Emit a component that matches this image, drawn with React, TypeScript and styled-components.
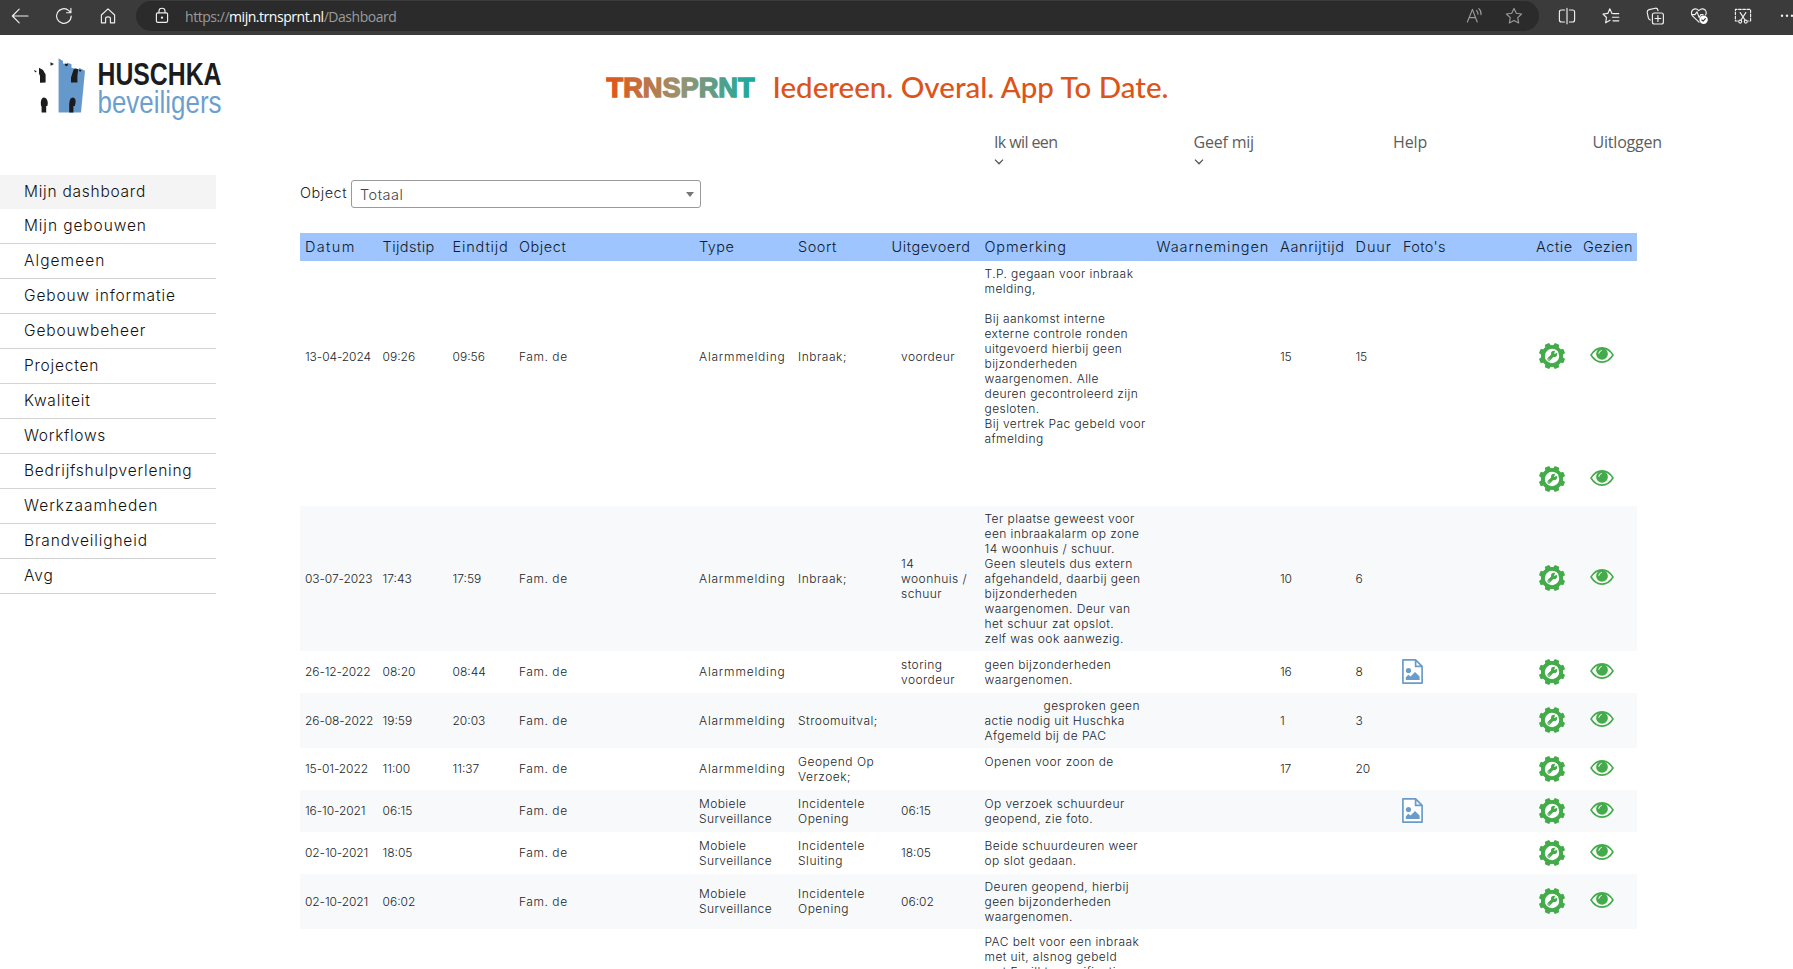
import type { ReactNode } from 'react';
import styled, { createGlobalStyle } from 'styled-components';

type Line = string | { text: string; indent?: number };

interface Report {
  date?: string;
  start?: string;
  end?: string;
  object?: string;
  type?: string[];
  kind?: string[];
  done?: string[];
  remark?: Line[];
  travel?: string;
  duration?: string;
  photo?: boolean;
  actions?: boolean;
  striped?: boolean;
  height: number;
}

const menuItems = [
  { label: 'Mijn dashboard', spacing: 0.75 },
  { label: 'Mijn gebouwen', spacing: 0.9 },
  { label: 'Algemeen', spacing: 1.05 },
  { label: 'Gebouw informatie', spacing: 0.87 },
  { label: 'Gebouwbeheer', spacing: 0.87 },
  { label: 'Projecten', spacing: 0.78 },
  { label: 'Kwaliteit', spacing: 0.83 },
  { label: 'Workflows', spacing: 0.68 },
  { label: 'Bedrijfshulpverlening', spacing: 0.78 },
  { label: 'Werkzaamheden', spacing: 0.98 },
  { label: 'Brandveiligheid', spacing: 0.84 },
  { label: 'Avg', spacing: 0.9 },
];

const navItems = [
  { label: 'Ik wil een', sub: true, spacing: -0.6 },
  { label: 'Geef mij', sub: true, spacing: -0.2 },
  { label: 'Help', sub: false, spacing: -0.1 },
  { label: 'Uitloggen', sub: false, spacing: -0.2 },
];

const columns = [
  { label: 'Datum', width: 77.5, spacing: 1.35 },
  { label: 'Tijdstip', width: 70, spacing: 0.45 },
  { label: 'Eindtijd', width: 66.5, spacing: 0.85 },
  { label: 'Object', width: 180, spacing: 0.55 },
  { label: 'Type', width: 99, spacing: 0.45 },
  { label: 'Soort', width: 93.5, spacing: 0.55 },
  { label: 'Uitgevoerd', width: 93, spacing: 0.55 },
  { label: 'Opmerking', width: 172, spacing: 0.87 },
  { label: 'Waarnemingen', width: 123.5, spacing: 0.92 },
  { label: 'Aanrijtijd', width: 75.5, spacing: 0.65 },
  { label: 'Duur', width: 47.5, spacing: 0.95 },
  { label: "Foto's", width: 133, spacing: 0.3 },
  { label: 'Actie', width: 47, spacing: 0.55 },
  { label: 'Gezien', width: 59, spacing: 0.45 },
];

const reports: Report[] = [
  {
    date: '13-04-2024',
    start: '09:26',
    end: '09:56',
    object: 'Fam. de',
    type: ['Alarmmelding'],
    kind: ['Inbraak;'],
    done: ['voordeur'],
    remark: [
      'T.P. gegaan voor inbraak',
      'melding,',
      '',
      'Bij aankomst interne',
      'externe controle ronden',
      'uitgevoerd hierbij geen',
      'bijzonderheden',
      'waargenomen. Alle',
      'deuren gecontroleerd zijn',
      'gesloten.',
      'Bij vertrek Pac gebeld voor',
      'afmelding',
    ],
    travel: '15',
    duration: '15',
    actions: true,
    height: 191,
  },
  { actions: true, height: 54 },
  {
    date: '03-07-2023',
    start: '17:43',
    end: '17:59',
    object: 'Fam. de',
    type: ['Alarmmelding'],
    kind: ['Inbraak;'],
    done: ['14', 'woonhuis /', 'schuur'],
    remark: [
      'Ter plaatse geweest voor',
      'een inbraakalarm op zone',
      '14 woonhuis / schuur.',
      'Geen sleutels dus extern',
      'afgehandeld, daarbij geen',
      'bijzonderheden',
      'waargenomen. Deur van',
      'het schuur zat opslot.',
      'zelf was ook aanwezig.',
    ],
    travel: '10',
    duration: '6',
    actions: true,
    striped: true,
    height: 145,
  },
  {
    date: '26-12-2022',
    start: '08:20',
    end: '08:44',
    object: 'Fam. de',
    type: ['Alarmmelding'],
    done: ['storing', 'voordeur'],
    remark: ['geen bijzonderheden', 'waargenomen.'],
    travel: '16',
    duration: '8',
    photo: true,
    actions: true,
    height: 42,
  },
  {
    date: '26-08-2022',
    start: '19:59',
    end: '20:03',
    object: 'Fam. de',
    type: ['Alarmmelding'],
    kind: ['Stroomuitval;'],
    remark: [
      { text: 'gesproken geen', indent: 59 },
      'actie nodig uit Huschka',
      'Afgemeld bij de PAC',
    ],
    travel: '1',
    duration: '3',
    actions: true,
    striped: true,
    height: 55,
  },
  {
    date: '15-01-2022',
    start: '11:00',
    end: '11:37',
    object: 'Fam. de',
    type: ['Alarmmelding'],
    kind: ['Geopend Op', 'Verzoek;'],
    remark: ['Openen voor zoon de', ''],
    travel: '17',
    duration: '20',
    actions: true,
    height: 42,
  },
  {
    date: '16-10-2021',
    start: '06:15',
    object: 'Fam. de',
    type: ['Mobiele', 'Surveillance'],
    kind: ['Incidentele', 'Opening'],
    done: ['06:15'],
    remark: ['Op verzoek schuurdeur', 'geopend, zie foto.'],
    photo: true,
    actions: true,
    striped: true,
    height: 42,
  },
  {
    date: '02-10-2021',
    start: '18:05',
    object: 'Fam. de',
    type: ['Mobiele', 'Surveillance'],
    kind: ['Incidentele', 'Sluiting'],
    done: ['18:05'],
    remark: ['Beide schuurdeuren weer', 'op slot gedaan.'],
    actions: true,
    height: 42,
  },
  {
    date: '02-10-2021',
    start: '06:02',
    object: 'Fam. de',
    type: ['Mobiele', 'Surveillance'],
    kind: ['Incidentele', 'Opening'],
    done: ['06:02'],
    remark: ['Deuren geopend, hierbij', 'geen bijzonderheden', 'waargenomen.'],
    actions: true,
    striped: true,
    height: 55,
  },
  {
    remark: [
      'PAC belt voor een inbraak',
      'met uit, alsnog gebeld',
      'met E-cill ter verificatie',
    ],
    height: 55,
  },
];

function Lines({ items = [] }: { items?: Line[] }) {
  return (
    <>
      {items.map((item, i) => {
        const line = typeof item === 'string' ? { text: item } : item;
        return (
          <TextLine key={i} $indent={line.indent}>
            {line.text}
          </TextLine>
        );
      })}
    </>
  );
}

function GearIcon() {
  const teeth = [22.5, 67.5, 112.5, 157.5, 202.5, 247.5, 292.5, 337.5];
  return (
    <svg width="26" height="26" viewBox="0 0 26 26">
      <g fill="#43ab49">
        {teeth.map((angle) => (
          <path
            key={angle}
            d="M9.9 4 L10.5 .5 Q10.6 -.2 11.4 -.2 H14.6 Q15.4 -.2 15.5 .5 L16.1 4 Z"
            transform={`rotate(${angle} 13 13)`}
          />
        ))}
        <circle cx="13" cy="13" r="11" />
      </g>
      <circle cx="13" cy="13" r="7.2" fill="#fff" />
      <path d="M10 16 L14.6 11.4" stroke="#43ab49" strokeWidth="3.2" strokeLinecap="round" />
      <circle cx="15.1" cy="10.9" r="3.1" fill="#43ab49" />
      <path d="M15 11 L16.6 6.4 L19.6 9.2 Z" fill="#fff" />
      <circle cx="9.9" cy="16.1" r=".6" fill="#fff" />
    </svg>
  );
}

function EyeIcon() {
  return (
    <svg width="24" height="16" viewBox="0 0 24 16">
      <path
        d="M1 8 C4 3.2 8 .9 12 .9 S20 3.2 23 8 C20 12.8 16 15.1 12 15.1 S4 12.8 1 8Z"
        fill="#fff"
        stroke="#43ab49"
        strokeWidth="1.6"
        strokeLinejoin="round"
      />
      <circle cx="12" cy="6.9" r="5.9" fill="#43ab49" />
      <path d="M8.8 6.4 Q9 4 11.4 3.5" fill="none" stroke="#fff" strokeWidth="1" strokeLinecap="round" />
    </svg>
  );
}

function PhotoIcon() {
  return (
    <svg width="21" height="25" viewBox="0 0 21 25">
      <path
        d="M.9 .9 H13.6 L20.1 7.4 V24.1 H.9Z M13.6 .9 V7.4 H20.1"
        fill="#fff"
        stroke="#6a9ccb"
        strokeWidth="1.7"
        strokeLinejoin="round"
      />
      <circle cx="6.5" cy="11.5" r="2.6" fill="#6a9ccb" />
      <path d="M3.8 21 V18.2 L6.4 15.8 L8.6 17.6 L13 13 L17.6 17.6 V21Z" fill="#6a9ccb" />
    </svg>
  );
}

function CompanyLogo() {
  return (
    <svg width="194" height="72" viewBox="0 0 194 72">
      <path
        d="M28.6 .3 L33 3 L33 5.3 L36 7 L37.5 4.8 L41.5 6.2 V9.8 L48 11.6 L49.5 10 L55 12.8 L51 54.6 H28.6Z"
        fill="#6699cb"
      />
      <g fill="#1c1c1e">
        <path d="M9 9.8 L13 12 L15.6 16.6 V24.5 L10 24.8 V18 L9 15.5Z" />
        <path d="M3.8 12.2 L6.8 13 L5.4 14.6Z" />
        <path d="M20.4 4.2 L24 6 L20.6 7.8Z" />
        <path d="M11.6 54.6 V49 Q10.6 47.6 10.8 44 Q11.4 39.4 14 39.4 Q17.6 40 17.8 45 L17.4 48 H16.2 V54.6Z" />
        <path d="M34.6 5.6 L38.2 6 L37 8.2 L35 7.4Z" />
        <path d="M48.4 11.6 L51.8 12.2 L50 14Z" />
        <path d="M41 24.6 V19.6 L43.6 11.6 Q45.4 9.4 48.2 11.4 L47.4 18 V24.4Z" />
        <path d="M39.2 54.6 V46 Q39.4 39.8 42.8 39.4 Q46 40 45.6 44.6 L44.8 48 H43.4 V54.6Z" />
      </g>
      <LogoName x="67.5" y="27" textLength="124" lengthAdjust="spacingAndGlyphs">
        HUSCHKA
      </LogoName>
      <LogoSub x="67.5" y="55" textLength="124" lengthAdjust="spacingAndGlyphs">
        beveiligers
      </LogoSub>
    </svg>
  );
}

function Slogan() {
  return (
    <svg width="568" height="40" viewBox="0 0 568 40">
      <defs>
        <linearGradient id="brand" gradientUnits="userSpaceOnUse" x1="4" x2="144" y1="0" y2="0">
          <stop offset="0" stopColor="#e2551b" />
          <stop offset="0.5" stopColor="#9a9270" />
          <stop offset="1" stopColor="#1fa99c" />
        </linearGradient>
      </defs>
      <BrandText
        x="0.6"
        y="25.5"
        textLength="148"
        lengthAdjust="spacingAndGlyphs"
        fill="url(#brand)"
        stroke="url(#brand)"
      >
        TRNSPRNT
      </BrandText>
      <SloganText x="166.5" y="26.6" textLength="396" lengthAdjust="spacingAndGlyphs">
        Iedereen. Overal. App To Date.
      </SloganText>
    </svg>
  );
}

function BarIcon({ children, dim }: { children: ReactNode; dim?: boolean }) {
  return (
    <BarSlot $dim={dim}>
      <svg
        width="18"
        height="18"
        viewBox="0 0 18 18"
        fill="none"
        stroke="currentColor"
        strokeWidth="1.15"
        strokeLinecap="round"
        strokeLinejoin="round"
      >
        {children}
      </svg>
    </BarSlot>
  );
}

export default function App() {
  return (
    <Page>
      <GlobalStyle />
      <BrowserBar>
        <BarIcon>
          <path d="M17 9 H1.6 M8.2 2.2 L1.4 9 L8.2 15.8" />
        </BarIcon>
        <BarIcon>
          <path d="M16.2 9 A7.3 7.3 0 1 1 13.8 3.6 L15.8 5.6 M15.9 1.4 V5.7 H11.6" />
        </BarIcon>
        <BarIcon>
          <path d="M2.4 8 L9 1.8 L15.6 8 V15.8 H11.4 V11.4 Q11.4 9.8 9 9.8 Q6.6 9.8 6.6 11.4 V15.8 H2.4Z" />
        </BarIcon>
        <AddressBar>
          <BarIcon>
            <rect x="3.4" y="5.8" width="11.2" height="9.6" rx="1.4" />
            <path d="M6 5.6 V4 Q6 1.2 9 1.2 T12 4 V5.6" />
            <circle cx="9" cy="10.6" r=".6" fill="currentColor" />
          </BarIcon>
          <Url>
            https://<strong>mijn.trnsprnt.nl</strong>/Dashboard
          </Url>
          <BarIcon dim>
            <path d="M2.4 15 L7.4 2.4 L12.2 15 M4.2 10.6 H10.6 M11.4 3.4 Q13 4.8 13 7.2 M13.8 1.6 Q16.4 3.8 16 7.6" />
          </BarIcon>
          <BarIcon dim>
            <path d="M9 1.4 L11.3 6.3 L16.6 7 L12.7 10.7 L13.7 16 L9 13.4 L4.3 16 L5.3 10.7 L1.4 7 L6.7 6.3Z" />
          </BarIcon>
        </AddressBar>
        <BarIcon>
          <path d="M9 1.2 V16.8 M6.6 3 H3.6 Q1.4 3 1.4 5 V13 Q1.4 15 3.6 15 H6.6 M11.4 3 H14.4 Q16.6 3 16.6 5 V13 Q16.6 15 14.4 15 H11.4" />
        </BarIcon>
        <BarIcon>
          <path d="M10 6.6 L7.8 1.8 L5.8 6.4 L1 7 L4.5 10.5 L3.6 15.8 L8 13.2 M11 6.6 H16.8 M10.4 10.2 H16.8 M11 13.8 H16.8" />
        </BarIcon>
        <BarIcon>
          <rect x="6.4" y="6" width="11" height="11" rx="2" />
          <path d="M11.9 8.6 V14.4 M9 11.5 H14.8 M4.4 13 Q2.6 12.4 2.2 10.4 L1.2 5.4 Q1 3.2 3 2.6 L9.4 1.2 Q11.6 1 12 3.6" />
        </BarIcon>
        <BarIcon>
          <path d="M9 15.2 L2.2 8.6 Q.6 5.2 2.6 3 Q5.8 .6 8.8 3.6 Q12 .6 15.2 3 Q17 5.2 15.6 8 M1.6 7.6 H5 L7 4.8 L9.2 10.6 L10.8 7.6 H13" />
          <circle cx="13.6" cy="12.8" r="4.2" fill="#fff" stroke="none" />
          <path d="M11.8 13 L13.1 14.2 L15.4 11.6" stroke="#3b3b3b" />
        </BarIcon>
        <BarIcon>
          <path d="M3.4 14 H1.4 V2.4 H16.6 V14 H14.6" strokeDasharray="2.6 1.6" />
          <path d="M6.2 5.6 L11 13 M11.8 5.6 L7 13" />
          <circle cx="6.2" cy="14.6" r="1.5" />
          <circle cx="11.8" cy="14.6" r="1.5" />
        </BarIcon>
        <BarIcon>
          <g fill="currentColor" stroke="none">
            <circle cx="4" cy="8.8" r="1.2" />
            <circle cx="9" cy="8.8" r="1.2" />
            <circle cx="14" cy="8.8" r="1.2" />
          </g>
        </BarIcon>
      </BrowserBar>

      <Header>
        <CompanyLogo />
        <Slogan />
      </Header>

      <TopNav>
        {navItems.map((item) => (
          <NavItem key={item.label} $spacing={item.spacing}>
            {item.label}
            {item.sub && (
              <svg width="10" height="8" viewBox="0 0 10 8">
                <path d="M1 1.6 L5 5.8 L9 1.6" fill="none" stroke="#555" strokeWidth="1.3" />
              </svg>
            )}
          </NavItem>
        ))}
      </TopNav>

      <Body>
        <Sidebar>
          {menuItems.map((item, i) => (
            <MenuItem key={item.label} $active={i === 0} $spacing={item.spacing}>
              {item.label}
            </MenuItem>
          ))}
        </Sidebar>

        <Content>
          <Filter>
            <FilterLabel>Object</FilterLabel>
            <Select>
              Totaal
              <Caret />
            </Select>
          </Filter>

          <Table>
            <colgroup>
              {columns.map((col) => (
                <Col key={col.label} $width={col.width} />
              ))}
            </colgroup>
            <thead>
              <tr>
                {columns.map((col) => (
                  <HeadCell key={col.label} $spacing={col.spacing}>
                    {col.label}
                  </HeadCell>
                ))}
              </tr>
            </thead>
            <tbody>
              {reports.map((report, i) => (
                <Row key={i} $striped={report.striped} $height={report.height}>
                  <Cell $spacing={-0.1}>{report.date}</Cell>
                  <Cell $spacing={0}>{report.start}</Cell>
                  <Cell $spacing={0}>{report.end}</Cell>
                  <Cell $spacing={0.55}>{report.object}</Cell>
                  <Cell $spacing={report.type?.length === 1 ? 0.8 : 0.4}>
                    <Lines items={report.type} />
                  </Cell>
                  <Cell $spacing={0.52}>
                    <Lines items={report.kind} />
                  </Cell>
                  <Cell $inset $spacing={report.done?.[0].includes(':') ? 0 : 0.45}>
                    <Lines items={report.done} />
                  </Cell>
                  <Cell $spacing={0.42}>
                    <Lines items={report.remark} />
                  </Cell>
                  <Cell />
                  <Cell $spacing={-0.1}>{report.travel}</Cell>
                  <Cell $spacing={-0.1}>{report.duration}</Cell>
                  <IconCell $lift={1}>{report.photo && <PhotoIcon />}</IconCell>
                  <IconCell $left={8} $lift={1}>
                    {report.actions && <GearIcon />}
                  </IconCell>
                  <IconCell $left={12} $lift={3}>
                    {report.actions && <EyeIcon />}
                  </IconCell>
                </Row>
              ))}
            </tbody>
          </Table>
        </Content>
      </Body>
    </Page>
  );
}

const GlobalStyle = createGlobalStyle`
  * {
    box-sizing: border-box;
  }

  body {
    margin: 0;
    overflow: hidden;
    background: #fff;
    font-family: Inter, sans-serif;
    font-weight: 300;
  }

  svg {
    display: block;
    flex: none;
  }
`;

const Page = styled.div`
  width: 1793px;
  height: 969px;
  overflow: hidden;
`;

const BrowserBar = styled.header`
  display: flex;
  height: 35px;
  padding-bottom: 3px;
  overflow: hidden;
  background: #3b3b3b;

  & > :first-child {
    margin-left: -2px;
  }
`;

const BarSlot = styled.div<{ $dim?: boolean }>`
  display: flex;
  flex: none;
  align-items: center;
  justify-content: center;
  width: ${({ $dim }) => ($dim ? 40 : 44)}px;
  color: ${({ $dim }) => ($dim ? '#9a9a9a' : '#f0f0f0')};
`;

const AddressBar = styled.div`
  display: flex;
  flex: none;
  align-items: center;
  width: 1403px;
  height: 30px;
  margin: 1px 6px 0;
  padding: 0 5px 0 4px;
  border-radius: 15px;
  background: #2b2b2b;
`;

const Url = styled.div`
  flex: 1;
  padding-left: 1px;
  color: #9b9b9b;
  font: 14px 'Open Sans', sans-serif;
  letter-spacing: -0.46px;

  strong {
    color: #fff;
    font-weight: 400;
  }
`;

const Header = styled.div`
  display: flex;
  align-items: flex-start;
  height: 97px;
  padding: 23px 0 0 30px;

  & > :last-child {
    margin: 13px 0 0 382px;
  }
`;

const LogoName = styled.text`
  fill: #1c1c1e;
  font: 700 32px 'Liberation Sans', sans-serif;
`;

const LogoSub = styled.text`
  fill: #6c9fd0;
  font: 400 32px 'Liberation Sans', sans-serif;
`;

const BrandText = styled.text`
  font: 700 27px 'Liberation Sans', sans-serif;
  stroke-width: 1.4px;
`;

const SloganText = styled.text`
  fill: #dc5419;
  font: 500 28.5px Lato, sans-serif;
`;

const TopNav = styled.nav`
  display: flex;
  height: 43px;
  padding-left: 994px;
`;

const NavItem = styled.a<{ $spacing: number }>`
  width: 199.5px;
  color: #5c5c5c;
  font: 16px/20px 'Open Sans', sans-serif;
  letter-spacing: ${({ $spacing }) => $spacing}px;

  svg {
    margin-top: 6px;
  }
`;

const Body = styled.div`
  display: flex;
  align-items: flex-start;
`;

const Sidebar = styled.aside`
  flex: none;
  width: 216px;
`;

const MenuItem = styled.div<{ $active: boolean; $spacing: number }>`
  height: ${({ $active }) => ($active ? 34 : 35)}px;
  padding-left: 24px;
  border-bottom: ${({ $active }) => ($active ? 'none' : '1px solid #d3d3d5')};
  background: ${({ $active }) => ($active ? '#f4f4f4' : '#fff')};
  color: #111;
  font-size: 15.5px;
  line-height: 33px;
  letter-spacing: ${({ $spacing }) => $spacing}px;
`;

const Content = styled.main`
  flex: none;
  width: 1337px;
  margin-left: 84px;
  padding-top: 5px;
`;

const Filter = styled.div`
  display: flex;
  height: 28px;
  color: #22252a;
  font-size: 14.5px;
  letter-spacing: 0.5px;
`;

const FilterLabel = styled.label`
  width: 51px;
  line-height: 26px;
`;

const Select = styled.div`
  display: flex;
  align-items: center;
  justify-content: space-between;
  width: 350px;
  height: 28px;
  padding: 1px 6px 0 8px;
  border: 1px solid #9a9a9a;
  border-radius: 3px;
  color: #444;
`;

const Caret = styled.span`
  border: 4px solid transparent;
  border-top: 5px solid #777;
  border-bottom: 0;
`;

const Table = styled.table`
  width: 1337px;
  margin-top: 25px;
  border-collapse: collapse;
  table-layout: fixed;
`;

const Col = styled.col<{ $width: number }>`
  width: ${({ $width }) => $width}px;
`;

const HeadCell = styled.th<{ $spacing: number }>`
  height: 28px;
  padding: 0 0 2px 5px;
  background: #9ec5fe;
  color: #101b2c;
  font-size: 14.5px;
  font-weight: 300;
  letter-spacing: ${({ $spacing }) => $spacing}px;
  text-align: left;
  white-space: nowrap;
`;

const Row = styled.tr<{ $striped?: boolean; $height: number }>`
  height: ${({ $height }) => $height}px;
  background: ${({ $striped }) => ($striped ? '#f7f9fb' : '#fff')};
`;

const Cell = styled.td<{ $inset?: boolean; $spacing?: number }>`
  padding: 0 0 1px ${({ $inset }) => ($inset ? 14.5 : 5)}px;
  color: #212529;
  font-size: 12px;
  line-height: 15px;
  letter-spacing: ${({ $spacing = 0 }) => $spacing}px;
  white-space: nowrap;
`;

const IconCell = styled.td<{ $left?: number; $lift?: number }>`
  padding: 0 0 ${({ $lift = 0 }) => $lift}px ${({ $left = 4 }) => $left}px;
`;

const TextLine = styled.div<{ $indent?: number }>`
  min-height: 15px;
  padding-left: ${({ $indent = 0 }) => $indent}px;
`;
